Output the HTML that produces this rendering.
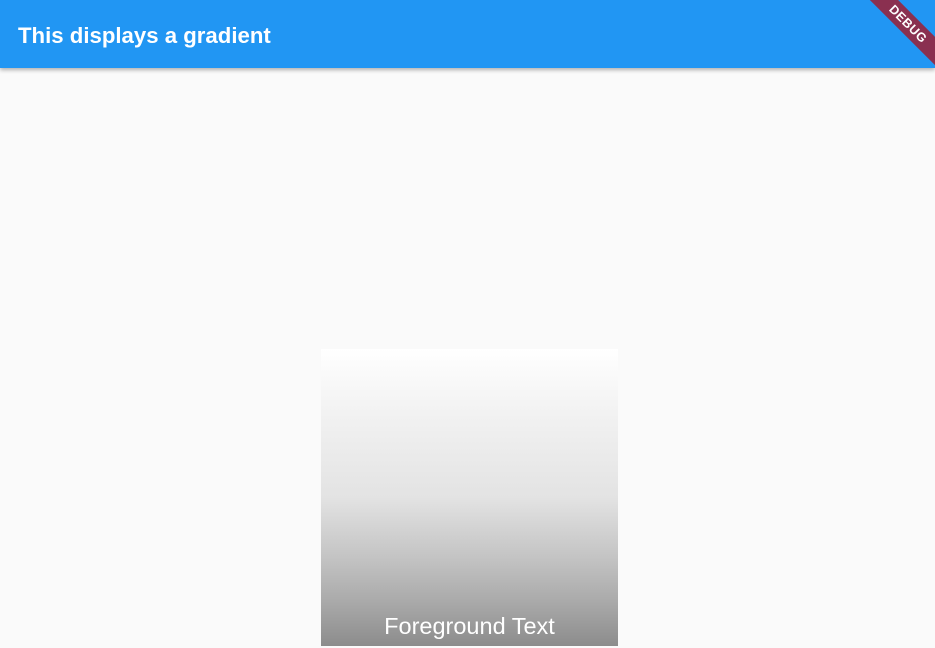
<!DOCTYPE html>
<html><head><style>
html,body{margin:0;padding:0;width:935px;height:648px;overflow:hidden;background:#fafafa;font-family:"Liberation Sans",sans-serif;}
.bar{position:absolute;left:0;top:0;width:935px;height:68px;background:#2196f3;box-shadow:0 2px 4px rgba(0,0,0,0.3);}
.title{position:absolute;left:18px;top:23px;color:#fff;font-size:22.2px;font-weight:bold;letter-spacing:0px;}
.ribbon{position:absolute;right:-38px;top:14px;width:130px;height:20px;background:#8a3050;transform:rotate(45deg);color:#fff;font-size:12.5px;font-weight:bold;text-align:center;line-height:20px;letter-spacing:0.5px;}
.box{position:absolute;left:321px;top:349px;width:297px;height:297px;background:linear-gradient(#ffffff 0%,#f0f0f0 25%,#e3e3e3 50%,#c4c4c4 70%,#aaaaaa 85%,#8c8c8c 100%);}
.fg{position:absolute;left:0;right:0;bottom:6px;text-align:center;color:#fff;font-size:23.5px;}
</style></head><body>
<div class="bar"><div class="title">This displays a gradient</div></div>
<div style="position:absolute;right:0;top:0;width:80px;height:80px;overflow:hidden"><div class="ribbon">DEBUG</div></div>
<div class="box"><div class="fg">Foreground Text</div></div>
</body></html>
